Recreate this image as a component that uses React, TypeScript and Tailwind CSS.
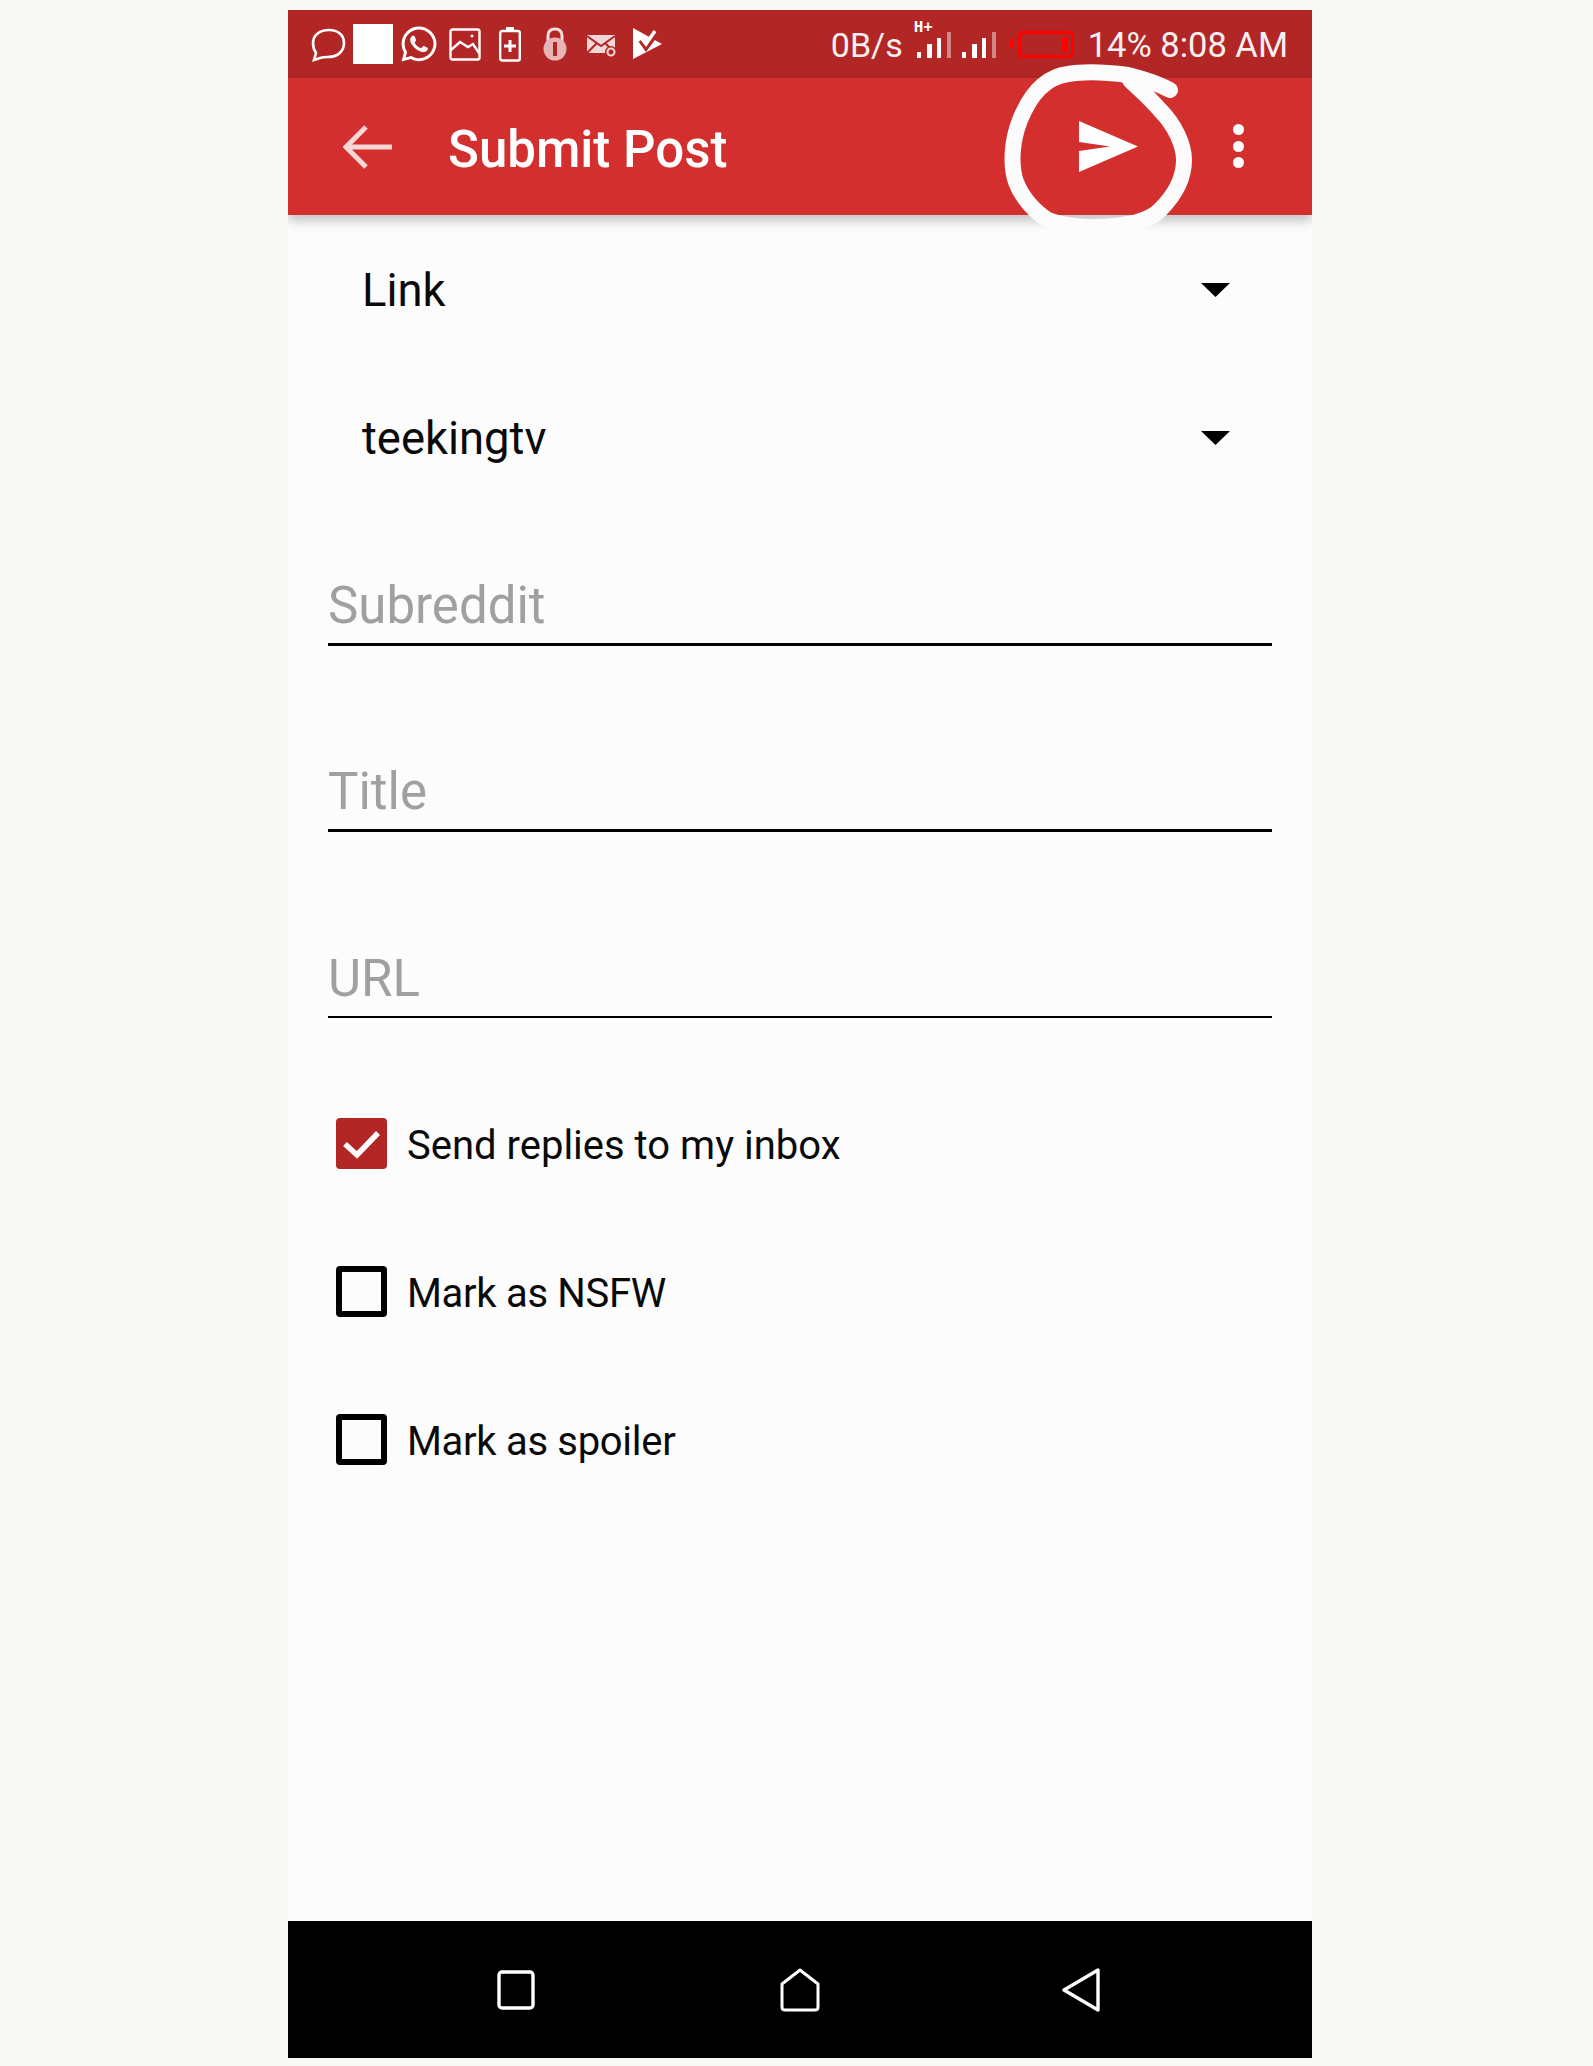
import React from "react";
import { FaWhatsapp } from "react-icons/fa";

function Dropdown({ label }: { label: string }) {
  return (
    <div className="flex h-[148px] items-center justify-between pl-[74px] pr-[82px]">
      <span className="mt-[4px] text-[45.4px] leading-none text-[#0a0a0a]">{label}</span>
      <svg width="29" height="14" viewBox="0 0 29 14" className="mt-[1px]">
        <polygon points="0,0 29,0 14.5,14" fill="#000" />
      </svg>
    </div>
  );
}

function Field({ label, first, thin }: { label: string; first?: boolean; thin?: boolean }) {
  return (
    <div
      className={`mx-[40px] flex flex-col justify-end border-black pb-[9px] ${first ? "h-[135px]" : "h-[186px]"} ${thin ? "border-b-2" : "border-b-[3px]"}`}
    >
      <span className="text-[51px] leading-[56px] text-[#a0a0a0]">{label}</span>
    </div>
  );
}

function CheckRow({ label, checked }: { label: string; checked?: boolean }) {
  return (
    <div className="flex h-[148px] items-center pl-[48px]">
      {checked ? (
        <div className="flex h-[51px] w-[51px] items-center justify-center rounded-[4px] bg-[#b22626]">
          <svg width="39" height="30" viewBox="0 0 39 30" fill="none">
            <path d="M3 15 L15 26 L36 4" stroke="#fff" strokeWidth="5.5" />
          </svg>
        </div>
      ) : (
        <div className="h-[51px] w-[51px] rounded-[4px] border-[6px] border-black" />
      )}
      <span
        className={`ml-[20px] mt-[5px] text-[40px] leading-none text-[#0a0a0a] ${checked ? "" : "tracking-[-0.3px]"}`}
      >
        {label}
      </span>
    </div>
  );
}

function Signal() {
  return (
    <svg width="37" height="27" viewBox="0 0 37 27" fill="#fff">
      <rect x="3" y="20" width="4" height="6" />
      <rect x="13" y="12" width="5" height="14" />
      <rect x="23" y="6" width="4" height="20" />
      <rect x="33" y="0" width="4" height="26" opacity="0.45" />
    </svg>
  );
}

export default function App() {
  return (
    <div className="h-[2066px] bg-[#f8f9f5] pt-[10px] [font-family:Roboto,sans-serif]">
      <div className="relative ml-[288px] flex h-[2048px] w-[1024px] flex-col overflow-hidden bg-[#fcfcfc]">
        {/* status bar */}
        <div className="flex h-[68px] shrink-0 items-center justify-between bg-[#b22626] pl-[23px] pr-[24px] text-white">
          <div className="flex items-center">
            <svg width="35" height="34" viewBox="0 0 35 34" fill="none" stroke="#fff" strokeWidth="2.6" className="mt-[1px]">
              <path d="M18 2 C27 2 33 7 33 15 C33 24 26 29 17 29 C14 29 12 29 9 30 L3 32 L5 25 C3 22 2 19 2 15 C2 7 9 2 18 2 Z" />
            </svg>
            <div className="ml-[7px] h-[40px] w-[40px] bg-white" />
            <FaWhatsapp size={40} color="#fff" className="ml-[6px]" />
            <svg width="32" height="33" viewBox="0 0 32 33" fill="none" stroke="#fff" strokeWidth="2.4" className="ml-[10px]">
              <rect x="1.5" y="1.5" width="29" height="30" rx="2" />
              <path d="M2 22 L11 14 L19 19 L24 16 L30 25" />
              <circle cx="23" cy="8" r="1.5" fill="#fff" stroke="none" />
            </svg>
            <svg width="22" height="35" viewBox="0 0 22 35" fill="none" className="ml-[18px]">
              <rect x="7" y="0" width="8" height="4" fill="#fff" />
              <rect x="1.2" y="4" width="19.6" height="29.5" rx="2" stroke="#fff" strokeWidth="2.4" />
              <path d="M11 13 V25 M5 19 H17" stroke="#fff" strokeWidth="3" />
            </svg>
            <svg width="24" height="34" viewBox="0 0 24 34" fill="none" className="ml-[22px]">
              <path d="M5 15 V9 C5 4 8 2 12 2 C16 2 19 4 19 9 V15" stroke="#f6dede" strokeWidth="3" />
              <circle cx="12" cy="22" r="11.5" fill="#e8b4b4" />
              <rect x="10" y="15" width="4" height="14" fill="#b22626" />
            </svg>
            <svg width="31" height="26" viewBox="0 0 31 26" className="ml-[20px] mt-[4px]">
              <path d="M0 2 H28 V20 H0 Z" fill="#f3d6d6" />
              <path d="M0 3 L14 13 L28 3 M0 20 L10 10 M28 20 L18 10" stroke="#b22626" strokeWidth="2" fill="none" />
              <circle cx="24" cy="19" r="6" fill="#b22626" />
              <circle cx="24" cy="19" r="3.5" fill="none" stroke="#f3d6d6" strokeWidth="2" />
            </svg>
            <svg width="30" height="32" viewBox="0 0 30 32" className="ml-[15px]">
              <path d="M0 0 L29 16 L0 31 Z" fill="#fff" />
              <path d="M8 12 L13 19 L24 4" stroke="#b22626" strokeWidth="6" fill="none" />
              <path d="M9 11 L13 16 L22 3" stroke="#fff" strokeWidth="3.5" fill="none" />
            </svg>
          </div>
          <div className="flex items-center text-[#f6f0f0]">
            <span className="mr-[-1px] mt-[2px] text-[34px] leading-none">0B/s</span>
            <div className="relative ml-[12px] flex items-end gap-[8px] pt-[2px]">
              <span className="absolute left-0 top-[-10px] font-['Liberation_Mono'] text-[16px] font-bold leading-none text-white">H+</span>
              <Signal />
              <Signal />
            </div>
            <svg width="64" height="27" viewBox="0 0 64 27" fill="none" className="ml-[14px]">
              <rect x="0" y="8" width="3" height="9" fill="#f00" />
              <rect x="9.5" y="1.5" width="53" height="24" rx="3" stroke="#f00" strokeWidth="3" />
              <rect x="52" y="6" width="6" height="15" fill="#f00" />
            </svg>
            <span className="ml-[14px] mt-[2px] whitespace-nowrap text-[34.5px] leading-none">14% 8:08 AM</span>
          </div>
        </div>

        {/* app bar */}
        <div className="relative flex h-[137px] shrink-0 items-center justify-between bg-[#d32f2f] pl-[55px] pr-[68px] shadow-[0_6px_10px_rgba(0,0,0,0.22)]">
          <div className="flex items-center">
            <svg width="50" height="44" viewBox="0 0 50 44" fill="none" stroke="#f8d7d7" strokeWidth="5">
              <path d="M49 22 H4 M23 2 L3 22 L23 42" />
            </svg>
            <span className="ml-[55px] mt-[6px] text-[51px] font-medium leading-none text-white">Submit Post</span>
          </div>
          <div className="flex items-center">
            <svg width="59" height="51" viewBox="0 0 59 51">
              <path d="M0 0 L59 25.5 L0 51 V30 L31 25.5 L0 21 Z" fill="#fff" />
            </svg>
            <div className="ml-[95px] mt-[-1px] flex flex-col gap-[5.5px]">
              <div className="h-[11px] w-[11px] rounded-full bg-white" />
              <div className="h-[11px] w-[11px] rounded-full bg-white" />
              <div className="h-[11px] w-[11px] rounded-full bg-white" />
            </div>
          </div>
        </div>

        {/* form */}
        <div className="flex flex-1 flex-col">
          <Dropdown label="Link" />
          <Dropdown label="teekingtv" />
          <Field label="Subreddit" first />
          <Field label="Title" />
          <Field label="URL" thin />
          <div className="mt-[51.5px]">
            <CheckRow label="Send replies to my inbox" checked />
            <CheckRow label="Mark as NSFW" />
            <CheckRow label="Mark as spoiler" />
          </div>
        </div>

        {/* nav bar */}
        <div className="flex h-[137px] shrink-0 items-center justify-between bg-black pl-[209px] pr-[212px]">
          <svg width="38" height="40" viewBox="0 0 38 40" fill="none" stroke="#fff" strokeWidth="3.4">
            <rect x="2" y="2" width="34" height="36" rx="3" />
          </svg>
          <svg width="40" height="44" viewBox="0 0 40 44" fill="none" stroke="#fff" strokeWidth="3" className="ml-[2px]">
            <path d="M20 2 L38 16 V39 C38 41 37 42 35 42 H5 C3 42 2 41 2 39 V16 Z" strokeLinejoin="round" />
          </svg>
          <svg width="38" height="44" viewBox="0 0 38 44" fill="none" stroke="#fff" strokeWidth="3.4">
            <path d="M36 2 V42 L2 22 Z" strokeLinejoin="round" />
          </svg>
        </div>

        {/* hand-drawn circle annotation */}
        <svg className="pointer-events-none absolute left-[0px] top-[0px]" width="1024" height="260" viewBox="288 10 1024 260" fill="none">
          <path
            d="M1170 90 C1155 82 1140 78 1128 75 C1105 72 1085 71 1068 74 C1045 77 1030 95 1020 120 C1012 140 1010 165 1016 182 C1022 198 1035 212 1048 220 C1065 226 1090 229 1115 226 C1135 224 1150 220 1160 210 C1175 195 1184 178 1184 160 C1184 145 1175 125 1160 110 C1150 98 1140 90 1130 80"
            stroke="#fbfbfb"
            strokeWidth="16"
            strokeLinecap="round"
          />
        </svg>
      </div>
    </div>
  );
}
